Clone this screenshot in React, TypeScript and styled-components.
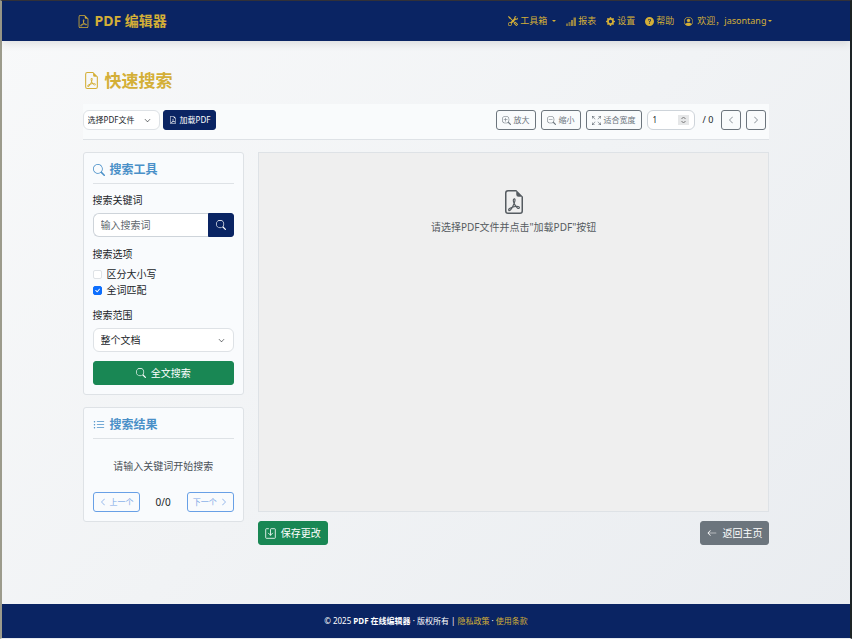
import React from "react";
import styled, { createGlobalStyle, css } from "styled-components";
import {
  BsFileEarmarkPdf, BsTools, BsGearFill, BsQuestionCircleFill, BsPersonCircle,
  BsZoomIn, BsZoomOut, BsArrowsFullscreen, BsChevronLeft, BsChevronRight,
  BsChevronDown, BsSearch, BsListUl, BsArrowLeft, BsCheck,
} from "react-icons/bs";

const navy = "#0a2463";
const gold = "#d4af37";
const blue = "#4a90c8";

const GlobalStyle = createGlobalStyle`
  *, *::before, *::after { box-sizing: border-box; }
  html, body, #root { min-height: 100vh; }
  body {
    margin: 0;
    font-family: "Noto Sans", "Noto Sans CJK SC", sans-serif;
    font-size: 10px;
    line-height: 16px;
    color: #212529;
  }
  button, input, select { font: inherit; color: inherit; }
  h1, h2, p { margin: 0; }
  a { text-decoration: none; }
  svg { flex-shrink: 0; }
`;

const Page = styled.div`
  min-height: 100vh;
  display: flex;
  flex-direction: column;
  border-style: solid;
  border-width: 1px 2px 1px 2px;
  border-color: #33323a #1d2426 #e9ecef #9c9b8c;
  background: linear-gradient(135deg, #f8f9fa 0%, #f1f3f5 50%, #e9ecf0 100%);
`;

const Header = styled.header`
  background: ${navy};
  color: ${gold};
  box-shadow: 0 3px 8px rgba(0, 0, 0, 0.1);
`;

const HeaderInner = styled.div`
  width: calc(81% + 12px);
  margin: 0 auto;
  height: 40px;
  display: flex;
  align-items: center;
  justify-content: space-between;
`;

const Brand = styled.a`
  display: flex;
  align-items: center;
  gap: 5px;
  color: ${gold};
  font-size: 14px;
  font-weight: 700;
`;

const Nav = styled.nav`
  display: flex;
  align-items: center;
  gap: 10px;
  padding-right: 3px;
  font-size: 9px;
`;

const NavLink = styled.a`
  display: flex;
  align-items: center;
  gap: 2px;
  color: ${gold};
  white-space: nowrap;
`;

const UserName = styled.span`
  padding-left: 2px;
`;

const Caret = styled.span<{ $spaced?: boolean }>`
  border: 2px solid transparent;
  border-top-color: currentColor;
  border-bottom: 0;
  margin-left: ${(p) => (p.$spaced ? "3px" : "0")};
`;

const Main = styled.main`
  flex: 1;
  width: 81%;
  margin: 0 auto;
  padding: 26px 0 32px;
`;

const PageTitle = styled.h1`
  display: flex;
  align-items: center;
  gap: 5px;
  height: 27px;
  color: ${gold};
  font-size: 17px;
  line-height: 27px;
  font-weight: 700;
`;

const Toolbar = styled.div`
  display: flex;
  align-items: flex-start;
  justify-content: space-between;
  margin-top: 10px;
  padding: 6px 3px 8px 0;
  height: 36px;
  background: #f9fbfc;
  border-bottom: 1px solid #dee2e6;
  font-size: 8px;
`;

const Group = styled.div<{ $gap: number }>`
  display: flex;
  align-items: center;
  gap: ${(p) => p.$gap}px;
`;

type Tone = "navy" | "green" | "gray" | "outline" | "blueOutline";

const tones = {
  navy: css`background: ${navy}; border-color: ${navy}; color: #fff;`,
  green: css`background: #198754; border-color: #198754; color: #fff;`,
  gray: css`background: #6c757d; border-color: #6c757d; color: #fff;`,
  outline: css`background: transparent; border-color: #6c757d; color: #6c757d;`,
  blueOutline: css`background: transparent; border-color: #68a0e6; color: #7ba7e6;`,
};

const Button = styled.button<{ $tone: Tone; $size?: "small" | "large"; $block?: boolean }>`
  display: flex;
  align-items: center;
  justify-content: center;
  gap: ${(p) => (p.$size === "large" ? "5px" : "3px")};
  width: ${(p) => (p.$block ? "100%" : "auto")};
  height: ${(p) => (p.$size === "large" ? "24px" : "20px")};
  padding: 0 ${(p) => (p.$size === "large" ? "6px" : "5px")};
  border: 1px solid;
  border-radius: 3px;
  font-size: ${(p) => (p.$size === "large" ? "10px" : "8px")};
  white-space: nowrap;
  ${(p) => tones[p.$tone]}
`;

const SelectWrap = styled.div`
  display: grid;
  align-items: center;
  > * { grid-area: 1 / 1; }
  > svg {
    justify-self: end;
    margin-right: 9px;
    pointer-events: none;
  }
`;

const Select = styled.select<{ $compact?: boolean }>`
  appearance: none;
  width: 100%;
  height: ${(p) => (p.$compact ? "20px" : "24px")};
  padding: 0 24px 0 ${(p) => (p.$compact ? "4px" : "7px")};
  border: 1px solid #dee2e6;
  border-radius: 6px;
  background: #fff;
`;

const PageField = styled.div`
  display: flex;
  align-items: center;
  width: 48px;
  height: 20px;
  padding: 0 5px;
  border: 1px solid #ced4da;
  border-radius: 6px;
  background: #fff;
`;

const PageInput = styled.input`
  flex: 1;
  min-width: 0;
  padding: 0;
  border: 0;
  outline: 0;
  background: transparent;
  appearance: textfield;
  &::-webkit-inner-spin-button { display: none; }
`;

const Total = styled.span`
  padding: 0 3px;
  font-size: 9px;
`;

const Columns = styled.div`
  display: grid;
  grid-template-columns: minmax(0, 161fr) minmax(0, 511fr);
  gap: 14px;
  margin-top: 12px;
`;

const Sidebar = styled.div`
  display: flex;
  flex-direction: column;
  gap: 12px;
`;

const Card = styled.section`
  padding: 9px;
  border: 1px solid #dee2e6;
  border-radius: 3px;
  background: #f9fbfd;
`;

const CardTitle = styled.h2`
  display: flex;
  align-items: center;
  gap: 5px;
  height: 22px;
  padding-bottom: 6px;
  border-bottom: 1px solid #dee2e6;
  color: ${blue};
  font-size: 12px;
  font-weight: 600;
`;

const Label = styled.label`
  display: block;
  margin: 0 0 5px;
`;

const SearchForm = styled.form`
  padding-top: 8px;
`;

const InputGroup = styled.div`
  display: flex;
  margin-bottom: 9px;
`;

const KeywordInput = styled.input`
  flex: 1;
  min-width: 0;
  height: 24px;
  padding: 0 7px;
  border: 1px solid #ced4da;
  border-right: 0;
  border-radius: 6px 0 0 6px;
  background: #fff;
  &::placeholder { color: #61676d; }
`;

const SearchButton = styled(Button)`
  width: 26px;
  border-radius: 0 3px 3px 0;
`;

const Options = styled.fieldset`
  margin: 0 0 9px;
  padding: 0;
  border: 0;
`;

const Legend = styled.legend`
  padding: 0 0 4px;
`;

const Check = styled.label`
  display: flex;
  align-items: center;
  gap: 5px;
`;

const Box = styled.span`
  display: grid;
  place-items: center;
  > * { grid-area: 1 / 1; }
  > svg { color: #fff; pointer-events: none; }
`;

const Checkbox = styled.input`
  appearance: none;
  width: 9px;
  height: 9px;
  margin: 0;
  border: 1px solid #dee2e6;
  border-radius: 2px;
  background: #fff;
  &:checked { background: #0d6efd; border-color: #0d6efd; }
`;

const ScopeSelect = styled(SelectWrap)`
  margin-bottom: 9px;
`;

const Hint = styled.p`
  padding: 19px 0 18px;
  text-align: center;
  color: #495057;
`;

const Pager = styled.div`
  display: flex;
  align-items: center;
  justify-content: space-between;
`;

const Viewer = styled.section`
  display: flex;
  flex-direction: column;
  align-items: center;
  gap: 5px;
  height: 360px;
  padding-top: 37px;
  border: 1px solid #dee2e6;
  background: #efefef;
  color: #555b60;
`;

const Actions = styled.div`
  display: flex;
  justify-content: space-between;
  margin-top: 9px;
`;

const Footer = styled.footer`
  display: flex;
  align-items: center;
  justify-content: center;
  height: 34px;
  background: ${navy};
  color: #fff;
  font-size: 8px;
`;

const FooterLink = styled.a`
  color: ${gold};
`;

const SignalIcon = () => (
  <svg width="10" height="9" viewBox="0 0 20 18" aria-hidden="true" fill={gold}>
    <path d="M0 13h4v5H0zM5 10h4v8H5z" opacity=".55" />
    <path d="M10 6h4v12h-4zM15 1h5v17h-5z" opacity=".7" />
  </svg>
);

const SaveIcon = () => (
  <svg width="11" height="11" viewBox="0 0 16 16" fill="none" stroke="currentColor" aria-hidden="true">
    <path d="M5 1H2a1 1 0 0 0-1 1v12a1 1 0 0 0 1 1h12a1 1 0 0 0 1-1V2a1 1 0 0 0-1-1H9a1 1 0 0 0-1 1v8.5M5 7.5l3 3 3-3" strokeLinecap="round" strokeLinejoin="round" strokeWidth="1.2" />
  </svg>
);

const SpinnerIcon = () => (
  <svg width="11" height="10" viewBox="0 0 11 10" aria-hidden="true">
    <rect width="11" height="10" fill="#e6e7e8" />
    <path d="M3.5 4 5.5 2l2 2M3.5 6l2 2 2-2" fill="none" stroke="#777" />
  </svg>
);

export default function App() {
  return (
    <>
      <GlobalStyle />
      <Page>
        <Header>
          <HeaderInner>
            <Brand href="#"><BsFileEarmarkPdf size={13} />PDF 编辑器</Brand>
            <Nav>
              <NavLink href="#tools"><BsTools size={10} />工具箱 <Caret $spaced /></NavLink>
              <NavLink href="#reports"><SignalIcon />报表</NavLink>
              <NavLink href="#settings"><BsGearFill size={9} />设置</NavLink>
              <NavLink href="#help"><BsQuestionCircleFill size={9} />帮助</NavLink>
              <NavLink href="#account"><BsPersonCircle size={9} /><UserName>欢迎，jasontang</UserName><Caret /></NavLink>
            </Nav>
          </HeaderInner>
        </Header>

        <Main>
          <PageTitle><BsFileEarmarkPdf size={17} />快速搜索</PageTitle>
          <Toolbar>
            <Group $gap={3}>
              <SelectWrap>
                <Select $compact aria-label="选择PDF文件"><option>选择PDF文件</option></Select>
                <BsChevronDown size={7} />
              </SelectWrap>
              <Button type="button" $tone="navy"><BsFileEarmarkPdf size={8} />加载PDF</Button>
            </Group>
            <Group $gap={5}>
              <Button type="button" $tone="outline"><BsZoomIn size={9} />放大</Button>
              <Button type="button" $tone="outline"><BsZoomOut size={9} />缩小</Button>
              <Button type="button" $tone="outline"><BsArrowsFullscreen size={9} />适合宽度</Button>
              <PageField>
                <PageInput type="number" aria-label="页码" defaultValue={1} />
                <SpinnerIcon />
              </PageField>
              <Total>/ 0</Total>
              <Button type="button" $tone="outline" aria-label="上一页"><BsChevronLeft size={8} /></Button>
              <Button type="button" $tone="outline" aria-label="下一页"><BsChevronRight size={8} /></Button>
            </Group>
          </Toolbar>

          <Columns>
            <Sidebar>
              <Card>
                <CardTitle><BsSearch size={12} />搜索工具</CardTitle>
                <SearchForm onSubmit={(e) => e.preventDefault()}>
                  <Label htmlFor="keyword">搜索关键词</Label>
                  <InputGroup>
                    <KeywordInput id="keyword" placeholder="输入搜索词" />
                    <SearchButton type="submit" $tone="navy" $size="large" aria-label="搜索"><BsSearch size={10} /></SearchButton>
                  </InputGroup>
                  <Options>
                    <Legend>搜索选项</Legend>
                    <Check><Box><Checkbox type="checkbox" /></Box>区分大小写</Check>
                    <Check><Box><Checkbox type="checkbox" defaultChecked /><BsCheck size={9} /></Box>全词匹配</Check>
                  </Options>
                  <Label htmlFor="scope">搜索范围</Label>
                  <ScopeSelect>
                    <Select id="scope"><option>整个文档</option></Select>
                    <BsChevronDown size={7} />
                  </ScopeSelect>
                  <Button type="submit" $tone="green" $size="large" $block><BsSearch size={10} />全文搜索</Button>
                </SearchForm>
              </Card>
              <Card>
                <CardTitle><BsListUl size={12} />搜索结果</CardTitle>
                <Hint>请输入关键词开始搜索</Hint>
                <Pager>
                  <Button type="button" $tone="blueOutline"><BsChevronLeft size={8} />上一个</Button>
                  <span>0/0</span>
                  <Button type="button" $tone="blueOutline">下一个<BsChevronRight size={8} /></Button>
                </Pager>
              </Card>
            </Sidebar>
            <div>
              <Viewer>
                <BsFileEarmarkPdf size={24} />
                <p>请选择PDF文件并点击"加载PDF"按钮</p>
              </Viewer>
              <Actions>
                <Button type="button" $tone="green" $size="large"><SaveIcon />保存更改</Button>
                <Button type="button" $tone="gray" $size="large"><BsArrowLeft size={10} />返回主页</Button>
              </Actions>
            </div>
          </Columns>
        </Main>

        <Footer>
          <p>© 2025 <strong>PDF 在线编辑器</strong> · 版权所有 | <FooterLink href="#privacy">隐私政策</FooterLink> · <FooterLink href="#terms">使用条款</FooterLink></p>
        </Footer>
      </Page>
    </>
  );
}
